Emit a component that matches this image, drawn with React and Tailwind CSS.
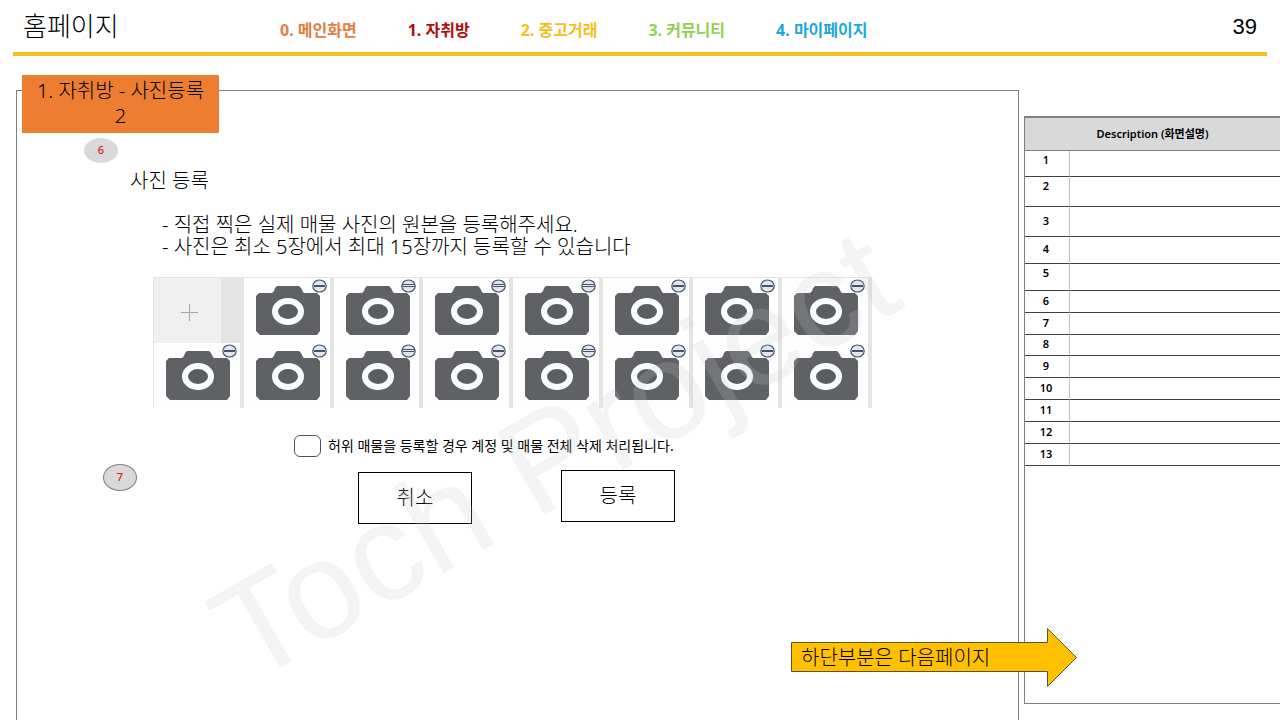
import React from "react";
import clsx from "clsx";

const menu = [
  { label: "0. 메인화면", color: "text-[#e08040]" },
  { label: "1. 자취방", color: "text-[#b00d0d]" },
  { label: "2. 중고거래", color: "text-[#f2bf1c]" },
  { label: "3. 커뮤니티", color: "text-[#92d050]" },
  { label: "4. 마이페이지", color: "text-[#1ba8d8]" }
];

// "hollow" draws the remove mark as an outlined bar
const photos = [
  { id: 1 },
  { id: 2, hollow: true },
  { id: 3, hollow: true },
  { id: 4, hollow: true },
  { id: 5 },
  { id: 6 },
  { id: 7 },
  { id: 8 },
  { id: 9 },
  { id: 10, hollow: true },
  { id: 11 },
  { id: 12, hollow: true },
  { id: 13 },
  { id: 14 },
  { id: 15 }
];

const rows = [
  { id: 1, cell: "h-[26px] align-top" },
  { id: 2, cell: "h-[30px] align-top" },
  { id: 3, cell: "h-[30px]" },
  { id: 4, cell: "h-[27px]" },
  { id: 5, cell: "h-[27px] align-top" },
  { id: 6, cell: "h-[22px]" },
  { id: 7, cell: "h-[22px]" },
  { id: 8, cell: "h-[21px]" },
  { id: 9, cell: "h-[22px]" },
  { id: 10, cell: "h-[22px]" },
  { id: 11, cell: "h-[22px]" },
  { id: 12, cell: "h-[22px]" },
  { id: 13, cell: "h-[22px]" }
];

function Header() {
  return (
    <header className="mx-[13px] flex h-14 items-center border-b-4 border-[#f2bf1c]">
      <h1 className="w-[267px] shrink-0 pl-[10px] text-[26px] font-light">
        홈페이지
      </h1>
      <nav className="flex gap-[51px] pt-2">
        {menu.map(item => (
          <a
            key={item.label}
            href="#"
            className={clsx("text-base font-bold whitespace-nowrap", item.color)}
          >
            {item.label}
          </a>
        ))}
      </nav>
      <span className="ml-auto pr-[10px] font-['Liberation_Sans'] text-[22px]">
        39
      </span>
    </header>
  );
}

function Marker({ className, children }) {
  return (
    <span
      className={clsx(
        "flex w-[34px] items-center justify-center rounded-[50%] bg-[#d9d9d9] text-[11px] font-medium text-[#e01818]",
        className
      )}
    >
      {children}
    </span>
  );
}

function Camera() {
  return (
    <svg width="64" height="49" viewBox="0 0 64 49" aria-hidden="true">
      <path
        d="M3 7H16L18 5L19 2L21 0H43L45 2L47 6L48 7H61L64 10V45L61 49H4L0 45V10Z"
        fill="#5f6164"
      />
      <ellipse
        cx="32"
        cy="25.5"
        rx="13"
        ry="10.5"
        fill="#5b5d60"
        stroke="#fbfcfd"
        strokeWidth="6"
      />
    </svg>
  );
}

function RemoveIcon({ hollow }) {
  return (
    <svg width="15" height="14" viewBox="0 0 15 14" aria-hidden="true">
      <ellipse
        cx="7.5"
        cy="7"
        rx="6.7"
        ry="6"
        fill="#e2e5ee"
        stroke="#44546a"
        strokeWidth="1.2"
      />
      {hollow ? (
        <rect
          x="2"
          y="5.5"
          width="11"
          height="2"
          fill="#e8eaf2"
          stroke="#44546a"
        />
      ) : (
        <path d="M2 7H13" stroke="#44546a" strokeWidth="2" />
      )}
    </svg>
  );
}

function PhotoGrid() {
  return (
    <ul className="mt-[19px] ml-[136px] grid w-[719px] grid-cols-8 bg-[#e4e4e4] pt-px pl-px">
      <li className="h-[65px]">
        <button
          type="button"
          aria-label="사진 추가"
          className="flex h-full w-[67px] items-center justify-center bg-[#f0f0f0] pt-1 pl-1"
        >
          <svg width="17" height="17" viewBox="0 0 17 17" aria-hidden="true">
            <path d="M8.5 0V17M0 8.5H17" stroke="#a6a6a6" />
          </svg>
        </button>
      </li>
      {photos.map(photo => (
        <li key={photo.id} className="relative mr-1 h-[65px] bg-[#fefefe]">
          <div className="pt-2 pl-3">
            <Camera />
          </div>
          <button
            type="button"
            aria-label="사진 삭제"
            className="absolute top-px right-[3px]"
          >
            <RemoveIcon hollow={photo.hollow} />
          </button>
        </li>
      ))}
    </ul>
  );
}

function PhotoForm() {
  return (
    <section className="relative flex-1 border border-b-0 border-[#7f7f7f]">
      <div className="-mt-4 ml-[5px] w-[197px] bg-[#ed7d31] px-2 pt-[3px] pb-[5px] text-center text-xl leading-[25px] font-light">
        1. 자취방 - 사진등록 2
      </div>
      <Marker className="mt-[5px] ml-[67px] h-[25px]">6</Marker>

      <h2 className="mt-1 ml-[113px] text-xl leading-7 font-light">
        사진 등록
      </h2>
      <div className="mt-[19px] ml-[145px] text-xl leading-[22px] font-light">
        <p>- 직접 찍은 실제 매물 사진의 원본을 등록해주세요.</p>
        <p>- 사진은 최소 5장에서 최대 15장까지 등록할 수 있습니다</p>
      </div>

      <PhotoGrid />

      <div className="mt-[27px] ml-[277px] flex items-center gap-[7px]">
        <input
          type="checkbox"
          id="agree"
          className="h-[22px] w-[27px] appearance-none rounded-md border border-[#44546a] bg-white"
        />
        <label htmlFor="agree" className="text-sm leading-[22px]">
          허위 매물을 등록할 경우 계정 및 매물 전체 삭제 처리됩니다.
        </label>
      </div>

      <div className="mt-[7px] ml-[86px] flex items-start">
        <Marker className="h-[27px] border border-[#7f7f7f]">7</Marker>
        <button
          type="button"
          className="mt-2 ml-[221px] h-[52px] w-[114px] border border-black bg-white text-xl font-light"
        >
          취소
        </button>
        <button
          type="button"
          className="mt-1.5 ml-[89px] h-[52px] w-[114px] border border-black bg-white text-xl font-light"
        >
          등록
        </button>
      </div>

      <div className="pointer-events-none absolute top-[363px] left-[537px] -translate-x-1/2 -translate-y-1/2 -rotate-30 font-['Liberation_Sans'] text-[138px] leading-none whitespace-nowrap text-[#c8c8c8]/20">
        Toch Project
      </div>
    </section>
  );
}

function Description() {
  return (
    <aside className="mt-[26px] mb-4 w-64 shrink-0 border-b border-l border-[#7f7f7f]">
      <table className="w-full border-separate border-spacing-0 text-[11px] leading-[18px]">
        <thead>
          <tr>
            <th
              colSpan={2}
              className="h-[35px] border-t-2 border-b border-[#7f7f7f] bg-[#d9d9d9] p-0 font-semibold"
            >
              Description (화면설명)
            </th>
          </tr>
        </thead>
        <tbody>
          {rows.map(row => (
            <tr key={row.id}>
              <td
                className={clsx(
                  "w-[45px] border-r border-b border-r-[#bfbfbf] border-b-[#404040] p-0 pr-0.5 pb-0.5 text-center font-semibold",
                  row.cell
                )}
              >
                {row.id}
              </td>
              <td className="border-b border-[#404040] p-0" />
            </tr>
          ))}
        </tbody>
      </table>
    </aside>
  );
}

function NextPage() {
  return (
    <a
      href="#"
      className="absolute top-[572px] right-[203px] flex h-[59px] w-[286px] items-center pl-[10px] text-xl font-light"
    >
      <svg
        className="absolute inset-0"
        width="286"
        height="59"
        viewBox="0 0 286 59"
        aria-hidden="true"
      >
        <path
          d="M0.5 14.5H256.5V0.5L285.5 29.5L256.5 58.5V43.5H0.5Z"
          fill="#ffc000"
          stroke="#5a5230"
        />
      </svg>
      <span className="relative">하단부분은 다음페이지</span>
    </a>
  );
}

export default function App() {
  return (
    <div className="flex min-h-screen flex-col bg-white font-['Noto_Sans','Noto_Sans_CJK_KR',sans-serif] text-black">
      <Header />
      <main className="relative flex flex-1 gap-[5px] pt-[34px] pl-4">
        <PhotoForm />
        <Description />
        <NextPage />
      </main>
    </div>
  );
}
